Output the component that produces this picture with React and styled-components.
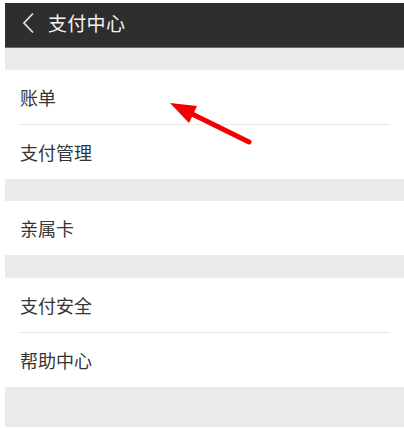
import React from 'react';
import styled, { createGlobalStyle } from 'styled-components';

const GlobalStyle = createGlobalStyle`
  html, body {
    margin: 0;
    padding: 0;
    background: #fff;
  }
  body {
    font-family: "Noto Sans CJK SC", "Noto Sans", sans-serif;
  }
`;

const Frame = styled.div`
  position: relative;
  width: 404px;
  height: 428px;
  overflow: hidden;
  background: #fff;
`;

const Screen = styled.div`
  display: flex;
  flex-direction: column;
  margin: 3px 0 1px 5px;
  height: 424px;
  background: #ebebeb;
`;

const TopBar = styled.div`
  display: flex;
  align-items: center;
  height: 45px;
  padding-bottom: 5px;
  box-sizing: border-box;
  background: #2e2e2e;
  border-bottom: 1px solid #6b6b6b;
  color: #fff;
  flex-shrink: 0;
`;

const Back = styled.div`
  display: flex;
  align-items: center;
  justify-content: center;
  width: 43px;
  padding-left: 4px;
  box-sizing: border-box;
`;

const Title = styled.div`
  font-size: 19px;
  letter-spacing: 0.3px;
  color: #f4f4f4;
`;

const Group = styled.div`
  display: flex;
  flex-direction: column;
  background: #fff;
  margin-top: ${(p) => p.gap}px;
`;

const Row = styled.div`
  display: flex;
  align-items: center;
  height: 54px;
  padding-left: 15px;
  font-size: 18px;
  color: #353535;
`;

const Divider = styled.div`
  height: 1px;
  margin: 0 14px 0 15px;
  background: #e6e6e6;
`;

const Arrow = styled.svg`
  position: absolute;
  left: 0;
  top: 0;
  pointer-events: none;
`;

const groups = [
  { gap: 22, items: ['账单', '支付管理'] },
  { gap: 22, items: ['亲属卡'] },
  { gap: 23, items: ['支付安全', '帮助中心'] },
];

export default function App() {
  return (
    <Frame>
      <GlobalStyle />
      <Screen>
        <TopBar>
          <Back>
            <svg width="14" height="22" viewBox="0 0 14 22">
              <polyline
                points="11,1.5 2,11 11,20.5"
                fill="none"
                stroke="#e0e0e0"
                strokeWidth="1.8"
              />
            </svg>
          </Back>
          <Title>支付中心</Title>
        </TopBar>
        {groups.map((g, gi) => (
          <Group key={gi} gap={g.gap}>
            {g.items.map((label, i) => (
              <React.Fragment key={label}>
                {i > 0 && <Divider />}
                <Row>{label}</Row>
              </React.Fragment>
            ))}
          </Group>
        ))}
      </Screen>
      <Arrow width="404" height="428" viewBox="0 0 404 428">
        <line
          x1="249"
          y1="142"
          x2="188"
          y2="112"
          stroke="#f40000"
          strokeWidth="5"
          strokeLinecap="round"
        />
        <polygon points="170,103 197,106 189,123" fill="#f40000" />
      </Arrow>
    </Frame>
  );
}
